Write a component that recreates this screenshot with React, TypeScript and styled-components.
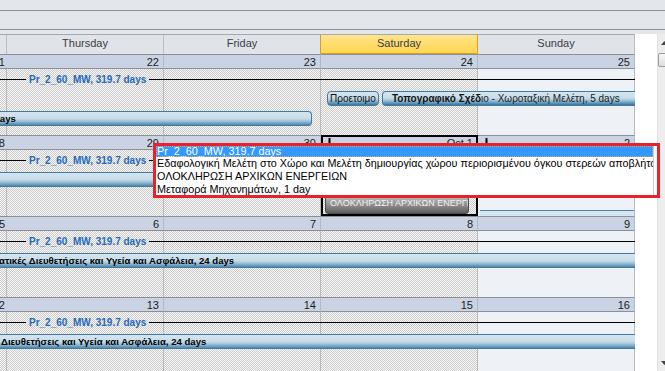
import React from "react";
import styled, { createGlobalStyle } from "styled-components";

const GlobalStyle = createGlobalStyle`
  html, body {
    margin: 0;
    padding: 0;
    overflow: hidden;
    background: #fff;
  }
  body {
    font-family: "Liberation Sans", Arial, sans-serif;
  }
`;

const COLS = "7px repeat(4, 157px)";

const Window = styled.div`
  position: relative;
  width: 665px;
  height: 371px;
  display: flex;
  flex-direction: column;
  overflow: hidden;
  background: #fff;
`;

const Strip = styled.div<{ $h: number; $line?: boolean }>`
  flex: none;
  height: ${(p) => p.$h}px;
  background: #e3e6eb;
  border-bottom: ${(p) => (p.$line ? "1px solid #8e9298" : "none")};
`;

const Body = styled.div`
  flex: 1;
  display: flex;
  min-height: 0;
`;

const Calendar = styled.div`
  flex: none;
  width: 635px;
  display: flex;
  flex-direction: column;
`;

const HeaderRow = styled.div`
  display: grid;
  grid-template-columns: ${COLS};
  height: 20px;
  box-sizing: border-box;
  border-top: 1px solid #a5a8ad;
  background: #e0e3e8;
`;

const DayName = styled.div<{ $today?: boolean }>`
  position: relative;
  box-sizing: border-box;
  height: 19px;
  border-right: 1px solid ${(p) => (p.$today ? "#e09c24" : "#b9bdc3")};
  border-bottom: ${(p) => (p.$today ? "1px solid #e09c24" : "none")};
  box-shadow: ${(p) => (p.$today ? "-1px 0 0 #e09c24" : "none")};
  background: ${(p) => (p.$today ? "linear-gradient(#ffe48c, #ffd650)" : "transparent")};
  color: #3a3d42;
  font-size: 11px;
  line-height: 16px;
  text-align: center;
  white-space: nowrap;
  overflow: hidden;
`;

const Week = styled.div`
  display: grid;
  grid-template-columns: ${COLS};
  grid-template-rows: 15px 3px 14px 5px 15px 5px 15px 9px;
`;

const DateCell = styled.div<{ $col: number }>`
  grid-row: 1;
  grid-column: ${(p) => p.$col};
  box-sizing: border-box;
  display: flex;
  align-items: center;
  justify-content: flex-end;
  gap: 4px;
  padding: 0 4px 0 5px;
  border-top: 1px solid #8c8f94;
  border-bottom: 1px solid #8c8f94;
  border-right: 1px solid #b3bac5;
  background: #c9d3e3;
  color: #1c1c1c;
  font-size: 11px;
  white-space: nowrap;
  overflow: hidden;
`;

const MoreArrow = styled.svg`
  flex: none;
  margin-right: auto;
  width: 7px;
  height: 9px;
`;

const DayCell = styled.div<{ $col: number; $free?: boolean }>`
  grid-row: 2 / -1;
  grid-column: ${(p) => p.$col};
  box-sizing: border-box;
  border-right: 1px solid #b9b9b9;
  background: ${(p) =>
    p.$free ? "#eef2f7" : "repeating-conic-gradient(#cbcbcb 0 25%, #f8f8f8 0 50%) 0 0 / 2px 2px"};
`;

const Selected = styled.div`
  grid-row: 1 / -1;
  grid-column: 4;
  box-sizing: border-box;
  border: 2px solid #000;
  pointer-events: none;
  z-index: 2;
`;

const ProjectLine = styled.div`
  grid-row: 3;
  grid-column: 1 / -1;
  display: flex;
  align-items: center;
  gap: 3px;
  z-index: 1;
`;

const Rule = styled.div<{ $w?: number }>`
  height: 1px;
  background: #000;
  ${(p) => (p.$w ? `width: ${p.$w}px; flex: none;` : "flex: 1;")}
`;

const ProjectLabel = styled.span`
  color: #2569bd;
  font-size: 10px;
  font-weight: bold;
  white-space: nowrap;
`;

const Bar = styled.div<{ $row: number; $cols: string; $endGap?: number; $rounded?: boolean }>`
  grid-row: ${(p) => p.$row};
  grid-column: ${(p) => p.$cols};
  margin-right: ${(p) => p.$endGap ?? 0}px;
  box-sizing: border-box;
  height: 15px;
  border-top: 1px solid #3f7ba6;
  border-right: ${(p) => (p.$rounded ? "1px solid #3f7ba6" : "none")};
  border-radius: ${(p) => (p.$rounded ? "0 4px 4px 0" : "0")};
  background: linear-gradient(#d4e5f0 0%, #c9dde9 45%, #a7c8dc 62%, #6b9ec0 82%, #3a7398 100%);
  color: #000;
  font-size: 9.6px;
  font-weight: bold;
  line-height: 13px;
  white-space: nowrap;
  overflow: hidden;
  z-index: 1;
`;

const BarText = styled.span<{ $shift?: number }>`
  display: inline-block;
  margin-left: ${(p) => p.$shift ?? 0}px;
`;

const SatLane = styled.div`
  grid-row: 5;
  grid-column: 4 / 6;
  display: flex;
  gap: 3px;
  padding-left: 6px;
  z-index: 1;
`;

const Chip = styled.div<{ $w?: number; $tail?: boolean }>`
  box-sizing: border-box;
  height: 15px;
  ${(p) => (p.$w ? `width: ${p.$w}px; flex: none;` : "flex: 1; min-width: 0;")}
  border: 1px solid #3f7ba6;
  border-right: ${(p) => (p.$tail ? "none" : "1px solid #3f7ba6")};
  border-radius: ${(p) => (p.$tail ? "4px 0 0 4px" : "4px")};
  background: linear-gradient(#d4e5f0 0%, #c9dde9 45%, #a7c8dc 62%, #6b9ec0 82%, #3a7398 100%);
  color: #111;
  font-size: 10px;
  line-height: 13px;
  padding-left: ${(p) => (p.$tail ? 9 : 2)}px;
  white-space: nowrap;
  overflow: hidden;
`;

const Strong = styled.b`
  font-weight: bold;
`;

const Light = styled.span`
  color: #222;
`;

const GreyTask = styled.div`
  grid-row: 7 / 9;
  grid-column: 4;
  align-self: end;
  margin: 0 9px 2px 4px;
  box-sizing: border-box;
  height: 18px;
  border: 1px solid #4e4e4e;
  border-radius: 3px;
  background: linear-gradient(#b9b9b9, #8a8a8a 55%, #5d5d5d);
  color: #f2f2f2;
  font-size: 9px;
  line-height: 12px;
  padding-left: 4px;
  white-space: nowrap;
  overflow: hidden;
  z-index: 1;
`;

const TailEdge = styled.div`
  grid-row: 8;
  grid-column: 5;
  margin: 3px 1px 0 2px;
  border-top: 1px solid #4a84ad;
  background: #d6e5f0;
  z-index: 1;
`;

const Gutter = styled.div`
  flex: none;
  width: 22px;
  background: #fff;
`;

const ScrollTrack = styled.div`
  flex: none;
  width: 17px;
  display: flex;
  flex-direction: column;
  background: #ededed;
  border-left: 1px solid #e2e2e2;
  box-sizing: border-box;
`;

const ScrollArrow = styled.div<{ $down?: boolean }>`
  flex: none;
  height: 17px;
  display: flex;
  align-items: center;
  padding-left: 3px;
  margin-top: ${(p) => (p.$down ? "auto" : "0")};
`;

const Thumb = styled.div`
  flex: none;
  height: 14px;
  margin-top: 2px;
  box-sizing: border-box;
  border: 1px solid #9c9c9c;
  border-radius: 2px;
  background: linear-gradient(#f7f7f7, #dedede);
`;

const Tooltip = styled.div`
  position: absolute;
  left: 153px;
  top: 143px;
  width: 507px;
  height: 55px;
  box-sizing: border-box;
  border: 3px solid #e8212b;
  background: #fff;
  z-index: 5;
`;

const TipList = styled.div`
  width: 498px;
  height: 100%;
  box-sizing: border-box;
  border-right: 1px solid #c9c9c9;
  overflow: hidden;
`;

const TipItem = styled.div<{ $active?: boolean }>`
  box-sizing: border-box;
  height: ${(p) => (p.$active ? 11 : 13)}px;
  padding-left: 1px;
  font-size: 10.8px;
  line-height: ${(p) => (p.$active ? 11 : 13)}px;
  white-space: nowrap;
  overflow: hidden;
  color: ${(p) => (p.$active ? "#fff" : "#000")};
  background: ${(p) => (p.$active ? "#3399ff" : "transparent")};
  outline: ${(p) => (p.$active ? "1px dotted #e5a35a" : "none")};
  outline-offset: -1px;
`;

const Down = () => (
  <MoreArrow viewBox="0 0 7 9">
    <path d="M2.5 0h2v5h2.5L3.5 9 0 5h2.5z" fill="#000" />
  </MoreArrow>
);

const days = ["", "Thursday", "Friday", "Saturday", "Sunday"];

const weeks = [
  ["21", "22", "23", "24", "25"],
  ["28", "29", "30", "Oct 1", "2"],
  ["5", "6", "7", "8", "9"],
  ["12", "13", "14", "15", "16"],
];

function WeekRow({ index }: { index: number }) {
  const dates = weeks[index];
  return (
    <Week>
      {dates.map((d, i) => (
        <DateCell key={"d" + i} $col={i + 1}>
          {index === 1 && (i === 3 || i === 4) && <Down />}
          {d}
        </DateCell>
      ))}
      {dates.map((_, i) => (
        <DayCell key={"c" + i} $col={i + 1} $free={i === 4} />
      ))}
      <ProjectLine>
        <Rule $w={26} />
        <ProjectLabel>Pr_2_60_MW, 319.7 days</ProjectLabel>
        <Rule />
      </ProjectLine>

      {index === 0 && (
        <>
          <SatLane>
            <Chip $w={52}>Προετοιμο</Chip>
            <Chip $tail>
              <Strong>Τοπογραφικό Σχέδ</Strong>
              <Light>ιο - Χωροταξική Μελέτη, 5 days</Light>
            </Chip>
          </SatLane>
          <Bar $row={7} $cols="1 / 4" $endGap={9} $rounded>
            <BarText $shift={-6}>days</BarText>
          </Bar>
        </>
      )}

      {index === 1 && (
        <>
          <Bar $row={5} $cols="1 / 4" $endGap={9} $rounded />
          <GreyTask>ΟΛΟΚΛΗΡΩΣΗ ΑΡΧΙΚΩΝ ΕΝΕΡΓΕΙΩΝ</GreyTask>
          <TailEdge />
          <Selected />
        </>
      )}

      {index === 2 && (
        <Bar $row={5} $cols="1 / -1">
          <BarText $shift={-1}>ατικές Διευθετήσεις και Υγεία και Ασφάλεια, 24 days</BarText>
        </Bar>
      )}

      {index === 3 && (
        <Bar $row={5} $cols="1 / -1">
          <BarText $shift={1}>Διευθετήσεις και Υγεία και Ασφάλεια, 24 days</BarText>
        </Bar>
      )}
    </Week>
  );
}

export default function App() {
  return (
    <>
      <GlobalStyle />
      <Window>
        <Strip $h={10} $line />
        <Strip $h={18} $line />
        <Strip $h={4} />
        <Body>
          <Calendar>
            <HeaderRow>
              {days.map((d) => (
                <DayName key={d || "wed"} $today={d === "Saturday"}>
                  {d}
                </DayName>
              ))}
            </HeaderRow>
            {weeks.map((_, i) => (
              <WeekRow key={i} index={i} />
            ))}
          </Calendar>
          <Gutter />
          <ScrollTrack>
            <ScrollArrow>
              <svg width="7" height="4" viewBox="0 0 7 4">
                <path d="M0 4L3.5 0 7 4z" fill="#444" />
              </svg>
            </ScrollArrow>
            <Thumb />
            <ScrollArrow $down>
              <svg width="7" height="4" viewBox="0 0 7 4">
                <path d="M0 0h7L3.5 4z" fill="#444" />
              </svg>
            </ScrollArrow>
          </ScrollTrack>
        </Body>
        <Tooltip>
          <TipList>
            <TipItem $active>Pr_2_60_MW, 319.7 days</TipItem>
            <TipItem>
              Εδαφολογική Μελέτη στο Χώρο και Μελέτη δημιουργίας χώρου περιορισμένου όγκου στερεών αποβλήτων
            </TipItem>
            <TipItem>ΟΛΟΚΛΗΡΩΣΗ ΑΡΧΙΚΩΝ ΕΝΕΡΓΕΙΩΝ</TipItem>
            <TipItem>Μεταφορά Μηχανημάτων, 1 day</TipItem>
          </TipList>
        </Tooltip>
      </Window>
    </>
  );
}
